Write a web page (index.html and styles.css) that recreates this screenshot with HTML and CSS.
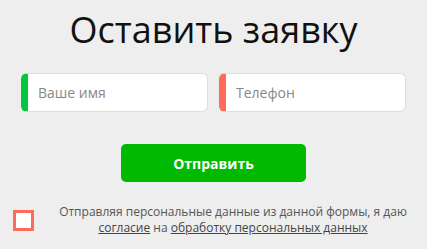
FILE: index.html
```html
<!DOCTYPE html>
<html lang="ru">
<head>
    <meta charset="UTF-8">
    <meta name="viewport" content="width=device-width, initial-scale=1.0">
    <title>Оставить заявку</title>
    <link rel="stylesheet" href="styles.css">
</head>
<body>
    <form class="request-form" onsubmit="return false;">
        <h1>Оставить заявку</h1>

        <div class="fields">
            <input class="field field-name" type="text" placeholder="Ваше имя">
            <input class="field field-phone" type="tel" placeholder="Телефон">
        </div>

        <button type="submit" class="send-btn">Отправить</button>

        <label class="agree">
            <span class="agree-box"></span>
            <span class="agree-text">Отправляя персональные данные из данной формы, я даю <a href="#">согласие</a> на <a href="#">обработку персональных данных</a></span>
        </label>
    </form>
</body>
</html>
```

FILE: styles.css
```css
body {
    margin: 0;
    background: #eeeeee;
    font-family: "Open Sans", "Liberation Sans", sans-serif;
}
.request-form {
    padding: 5px 21px 0;
}
h1 {
    margin: 0;
    font-size: 36px;
    font-weight: 400;
    line-height: 49px;
    text-align: center;
    color: #111;
}
.fields {
    display: flex;
    gap: 11px;
    margin-top: 19px;
}
.field {
    flex: 1;
    min-width: 0;
    height: 39px;
    box-sizing: border-box;
    padding: 0 10px;
    background: #fff;
    border: 1px solid #dddddd;
    border-left: 7px solid #00c83c;
    border-radius: 6px;
    font-family: inherit;
    font-size: 14px;
    color: #333;
    outline: none;
}
.field-phone {
    border-left-color: #ff6b5b;
}
.field::placeholder {
    color: #888;
}
.send-btn {
    display: block;
    width: 185px;
    height: 38px;
    margin: 32px auto 0;
    border: none;
    border-radius: 5px;
    background: #00b900;
    color: #fff;
    font-family: inherit;
    font-size: 14px;
    font-weight: 700;
    cursor: pointer;
}
.agree {
    display: flex;
    align-items: center;
    gap: 18px;
    margin: 22px -8px 0;
    cursor: pointer;
}
.agree-box {
    flex: none;
    width: 21px;
    height: 21px;
    box-sizing: border-box;
    border: 3px solid #ff6b5b;
    background: #fff;
}
.agree-text {
    flex: 1;
    font-size: 12px;
    line-height: 16px;
    text-align: center;
    color: #555;
}
.agree-text a {
    color: #444;
}
```
